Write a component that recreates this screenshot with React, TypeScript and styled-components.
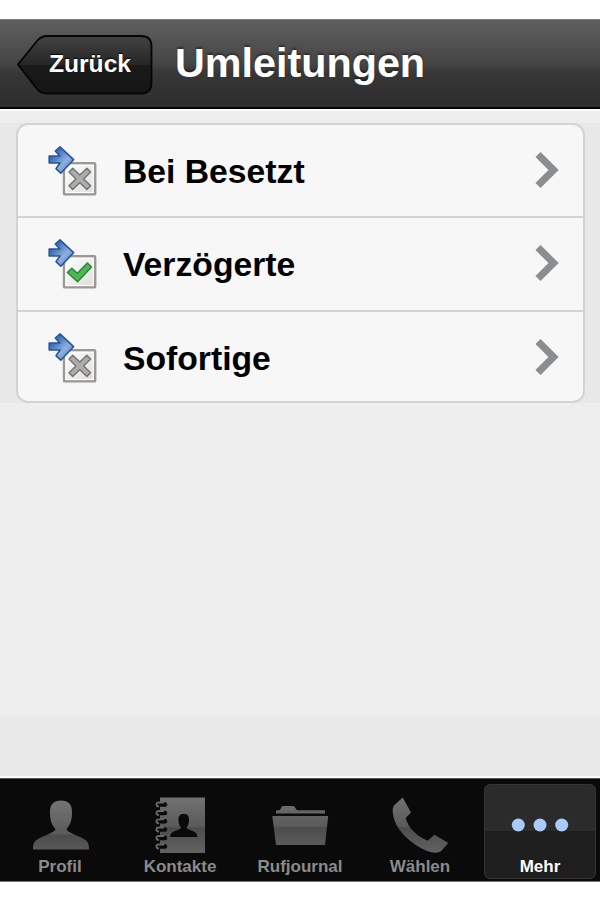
import React from "react";
import styled, { createGlobalStyle } from "styled-components";

const GlobalStyle = createGlobalStyle`
  * { box-sizing: border-box; }
  body {
    margin: 0;
    background: #fff;
    font-family: "Liberation Sans", Arial, Helvetica, sans-serif;
    font-weight: 700;
  }
`;

const Screen = styled.div`
  display: flex;
  flex-direction: column;
  width: 600px;
  height: 900px;
  padding: 19px 0 18px;
  background: #fff;
  overflow: hidden;
`;

const Header = styled.header`
  display: flex;
  flex: none;
  height: 90px;
  padding: 15px 0 0 17px;
  border-top: 1px solid #7c7c7c;
  border-bottom: 2px solid #000;
  background: linear-gradient(#5f5f5f 0%, #454545 50%, #363636 62%, #2d2d2d 100%);
`;

const BackButton = styled.button`
  display: grid;
  width: 136px;
  height: 60px;
  padding: 0;
  border: 0;
  background: none;
  color: #fff;
  font: inherit;
  font-size: 24.6px;
`;

const BackShape = styled.svg`
  grid-area: 1 / 1;
  display: block;
`;

const BackLabel = styled.span`
  grid-area: 1 / 1;
  padding-left: 32px;
  text-align: left;
  line-height: 57px;
  text-shadow: 0 -1px 1px #000;
`;

const Title = styled.h1`
  margin: 0 0 0 22px;
  color: #fff;
  font-size: 41.3px;
  line-height: 57px;
  text-shadow: 0 -2px 2px rgba(0, 0, 0, 0.4);
`;

const Content = styled.main`
  flex: 1;
  padding: 12px 15px 0 16px;
  border-top: 2px solid #fafafa;
  border-bottom: 2px solid #fafafa;
  background: linear-gradient(#ededed 12px, #e8e8e8 12px, #e8e8e8 292px, #eeeeee 292px, #eeeeee 605px, #e9e9e9 605px);
`;

const Card = styled.ul`
  margin: 0;
  padding: 0;
  height: 280px;
  list-style: none;
  border: 2px solid #d3d3d3;
  border-radius: 12px;
  background: #f7f7f7;
  overflow: hidden;
`;

const Row = styled.li`
  display: flex;
  height: 94px;
  padding: 0 24px 0 30px;
  border-bottom: 2px solid #d3d3d3;
  &:first-child { height: 93px; }
  &:last-child { border-bottom: 0; }
`;

const StatusIcon = styled.svg`
  flex: none;
  margin: 20px 25px 0 0;
`;

const RowLabel = styled.span`
  flex: 1;
  color: #000;
  font-size: 33.7px;
  line-height: 92px;
`;

const Chevron = styled.svg`
  flex: none;
  margin-top: 25px;
`;

const TabBar = styled.nav`
  display: grid;
  flex: none;
  grid-template-columns: repeat(5, 120px);
  height: 104px;
  padding-top: 5px;
  border-top: 1px solid #555;
  border-bottom: 1px solid #777;
  background: #0a0a0a;
`;

const Tab = styled.div<{ $active?: boolean }>`
  display: flex;
  flex-direction: column;
  align-items: center;
  width: ${(p) => (p.$active ? 112 : 120)}px;
  height: 95px;
  margin-left: ${(p) => (p.$active ? 4 : 0)}px;
  border: 1px solid ${(p) => (p.$active ? "#353535" : "transparent")};
  border-radius: 6px;
  background: ${(p) => (p.$active ? "linear-gradient(#2b2b2b 50%, #1e1e1e 50%)" : "none")};
  color: ${(p) => (p.$active ? "#fff" : "#8b8b8b")};
`;

const TabIcon = styled.svg`
  flex: none;
  margin-top: 8px;
`;

const TabLabel = styled.span`
  font-size: 17px;
  line-height: 20px;
`;

type Status = "off" | "on";

function ForwardIcon({ status, id }: { status: Status; id: string }) {
  return (
    <StatusIcon width="50" height="52" viewBox="0 0 50 52">
      <defs>
        <linearGradient id={`box${id}`} x2="1" y2="1">
          <stop stopColor="#fff" />
          <stop offset="1" stopColor="#dedddb" />
        </linearGradient>
        <linearGradient id={`arrow${id}`} x2="1" y2="1">
          <stop stopColor="#2c62b0" />
          <stop offset=".25" stopColor="#3b6db5" />
          <stop offset=".6" stopColor="#8fb0df" />
          <stop offset="1" stopColor="#3d6fb6" />
        </linearGradient>
      </defs>
      <rect x="16" y="18.2" width="31.2" height="31.2" rx="1" fill={`url(#box${id})`} stroke="#9b9994" strokeWidth="2.4" />
      <rect x="18" y="20.2" width="27.2" height="27.2" fill="none" stroke="#fff" />
      <path
        d="M1.2 11H11.8L7.3 6L12 1.9L25.6 14.7L12.8 28.2L8 23.6L12 18H1.2Z"
        fill={`url(#arrow${id})`}
        stroke="#2a5698"
        strokeWidth="1.6"
        strokeLinejoin="round"
      />
      {status === "off" ? (
        <path
          d="M24.7 23.3L31.8 30.1L38.9 23.3L42.6 27.1L35.7 33.9L42.6 40.8L38.9 44.6L31.8 37.8L24.7 44.6L21 40.8L27.9 33.9L21 27.1Z"
          fill="#acacac"
          stroke="#747474"
          strokeWidth="1.4"
          strokeLinejoin="round"
        />
      ) : (
        <path
          d="M19.4 34.5L23.8 30.2L29.4 35.3L39.4 25L43.5 29L29.6 43.8Z"
          fill="#4cb955"
          stroke="#2c8438"
          strokeWidth="1.5"
          strokeLinejoin="round"
        />
      )}
    </StatusIcon>
  );
}

const rows: { label: string; status: Status }[] = [
  { label: "Bei Besetzt", status: "off" },
  { label: "Verzögerte", status: "on" },
  { label: "Sofortige", status: "off" },
];

const person =
  "M28 0C35.5 0 39.300 4 39 12C39 20 37 25 33.500 28.500C34 32 44 34.500 50 38C55 40.500 56 43 56 49H0C0 43 1 40.500 6 38C12 34.500 22 32 22.500 28.500C19 25 17 20 17 12C16.700 4 20.500 0 28 0Z";

const ringRows = [10.5, 19, 27.3, 35.5, 44, 52.5];

const tabs: { label: string; icon: React.ReactNode; active?: boolean }[] = [
  { label: "Profil", icon: <path transform="translate(5 7.5)" d={person} fill="url(#tabFill)" /> },
  {
    label: "Kontakte",
    icon: (
      <>
        <path fill="url(#tabFill)" d="M12 4.500H57V60H12Z" />
        {ringRows.map((y) => (
          <g key={y} fill="none">
            <path d={`M11 ${y + 1}H17`} stroke="#0a0a0a" strokeWidth="4.5" strokeLinecap="round" />
            <path d={`M16 ${y - 1}H11C7.500 ${y - 1} 7.500 ${y + 3} 11 ${y + 3}`} stroke="#676767" strokeWidth="1.8" />
          </g>
        ))}
        <path transform="translate(22.3 21) scale(.48 .47)" d={person} fill="#090909" />
      </>
    ),
  },
  {
    label: "Rufjournal",
    icon: (
      <g fill="url(#tabFill)">
        <path d="M8 20.500V17.500L12 17L14 13H26L29 17.300H57V20.500Z" />
        <path d="M4.300 23H60.200L57 52H8Z" />
      </g>
    ),
  },
  {
    label: "Wählen",
    icon: (
      <path
        fill="url(#tabFill)"
        d="M14.700 4.500L23 19.500L17.700 25C19.500 34.500 30 44 39.700 47.700L46.500 41.700L60.300 50L53 58.300C50 60.500 43 60 37 57C20 49 6.500 35 5 21C4.500 17 4.500 14.500 6 12.500Z"
      />
    ),
  },
  {
    label: "Mehr",
    active: true,
    icon: (
      <g fill="#aacbfa">
        <circle cx="10.3" cy="32" r="6.5" />
        <circle cx="32" cy="32" r="6.5" />
        <circle cx="53.7" cy="32" r="6.5" />
      </g>
    ),
  },
];

export default function App() {
  return (
    <>
      <GlobalStyle />
      <Screen>
        <Header>
          <BackButton>
            <BackShape width="136" height="60" viewBox="0 0 136 60">
              <defs>
                <linearGradient id="backFill" x2="0" y2="1">
                  <stop stopColor="#424242" />
                  <stop offset=".5" stopColor="#262626" />
                  <stop offset=".51" stopColor="#1a1a1a" />
                  <stop offset="1" stopColor="#151515" />
                </linearGradient>
              </defs>
              <path
                d="M30 1H124Q134.500 1 134.500 11V48Q134.500 58.500 124 58.500H30Q23.500 58.500 20 54L1 29.500L20 6Q24 1 30 1Z"
                fill="url(#backFill)"
                stroke="#050505"
                strokeWidth="1.8"
              />
            </BackShape>
            <BackLabel>Zurück</BackLabel>
          </BackButton>
          <Title>Umleitungen</Title>
        </Header>
        <Content>
          <Card>
            {rows.map((row, i) => (
              <Row key={row.label}>
                <ForwardIcon status={row.status} id={String(i)} />
                <RowLabel>{row.label}</RowLabel>
                <Chevron width="25" height="40" viewBox="0 0 25 40">
                  <path d="M4 4.500L19.500 20L4 35.500" fill="none" stroke="#8b8e90" strokeWidth="7.3" />
                </Chevron>
              </Row>
            ))}
          </Card>
        </Content>
        <TabBar>
          {tabs.map((tab) => (
            <Tab key={tab.label} $active={tab.active}>
              <TabIcon width="64" height="64" viewBox="0 0 64 64">
                <defs>
                  <linearGradient id="tabFill" gradientUnits="userSpaceOnUse" x1="0" y1="4" x2="0" y2="60">
                    <stop stopColor="#717171" />
                    <stop offset=".52" stopColor="#5b5b5b" />
                    <stop offset=".55" stopColor="#4c4c4c" />
                    <stop offset="1" stopColor="#626262" />
                  </linearGradient>
                </defs>
                {tab.icon}
              </TabIcon>
              <TabLabel>{tab.label}</TabLabel>
            </Tab>
          ))}
        </TabBar>
      </Screen>
    </>
  );
}
